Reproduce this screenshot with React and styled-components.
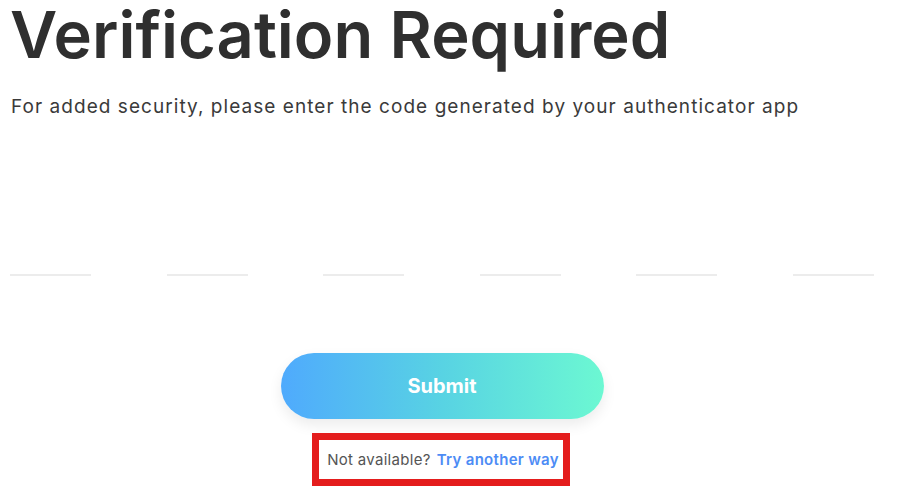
import React from "react";
import styled, { createGlobalStyle } from "styled-components";

const Global = createGlobalStyle`
  html, body { margin: 0; padding: 0; background: #ffffff; }
  body { font-family: Inter, "Noto Sans", sans-serif; }
`;

const Page = styled.main`
  width: 864px;
  padding: 2px 0 0 10px;
  display: flex;
  flex-direction: column;
`;

const Title = styled.h1`
  margin: 0;
  font-size: 65px;
  line-height: 1;
  font-weight: 600;
  color: #2f2f2f;
  letter-spacing: 0;
`;

const Subtitle = styled.p`
  margin: 28px 0 0 1px;
  font-size: 19px;
  line-height: 24px;
  letter-spacing: 1.05px;
  color: #3a3a3a;
  font-weight: 400;
  white-space: nowrap;
`;

const CodeRow = styled.div`
  margin-top: 125px;
  display: flex;
  justify-content: space-between;
`;

const Digit = styled.input`
  width: 81px;
  height: 30px;
  border: none;
  border-bottom: 2px solid #ececec;
  padding: 0;
  outline: none;
  background: transparent;
  text-align: center;
  font-size: 20px;
  font-family: inherit;
`;

const Actions = styled.div`
  display: flex;
  flex-direction: column;
  align-items: center;
  margin-top: 77px;
`;

const SubmitButton = styled.button`
  width: 323px;
  height: 66px;
  border: none;
  border-radius: 33px;
  background: linear-gradient(90deg, #4faafd 0%, #58d3e3 50%, #6cf8d2 100%);
  color: #ffffff;
  font-family: inherit;
  font-size: 20px;
  font-weight: 700;
  box-shadow: 0 6px 14px rgba(0, 0, 0, 0.08);
  cursor: pointer;
`;

const Highlight = styled.div`
  margin-top: 14px;
  margin-left: -2px;
  border: 7px solid #e41d1d;
  padding: 10px 4px 10px 8px;
  display: flex;
  gap: 6px;
  font-size: 15px;
  line-height: 19px;
  letter-spacing: 0.3px;
  white-space: nowrap;
`;

const Muted = styled.span`
  color: #555555;
`;

const Link = styled.a`
  color: #4d8cf5;
  font-weight: 600;
  text-decoration: none;
`;

export default function App() {
  return (
    <>
      <Global />
      <Page>
        <Title>Verification Required</Title>
        <Subtitle>
          For added security, please enter the code generated by your authenticator app
        </Subtitle>
        <CodeRow>
          {[0, 1, 2, 3, 4, 5].map((i) => (
            <Digit key={i} maxLength={1} aria-label={`Digit ${i + 1}`} />
          ))}
        </CodeRow>
        <Actions>
          <SubmitButton>Submit</SubmitButton>
          <Highlight>
            <Muted>Not available?</Muted>
            <Link href="#">Try another way</Link>
          </Highlight>
        </Actions>
      </Page>
    </>
  );
}
